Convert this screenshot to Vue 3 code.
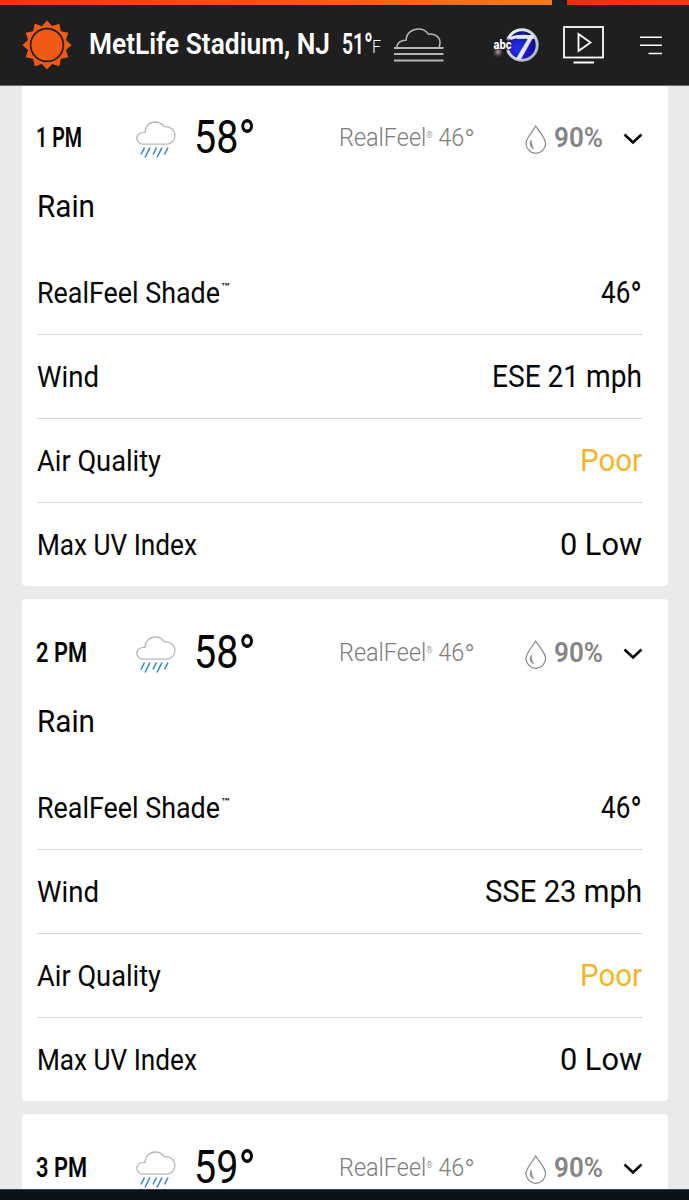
<script setup>
import { h } from 'vue'

// one line of text condensed to a given width, centred on its cap height
const FitText = (props, { slots }) =>
  h('svg', { width: props.w, height: 32, overflow: 'visible' }, [
    h(
      'text',
      { x: 0, y: 16, dy: '.355em', textLength: props.w, lengthAdjust: 'spacingAndGlyphs', fill: 'currentColor' },
      slots.default(),
    ),
  ])
FitText.props = ['w']

const sunPoints = Array.from({ length: 24 }, (_, i) => {
  const r = i % 2 ? 19.6 : 24.6
  const a = (i * Math.PI) / 12
  return `${(25 + r * Math.sin(a)).toFixed(2)},${(25 - r * Math.cos(a)).toFixed(2)}`
}).join(' ')

const hours = [
  { time: '1 PM', timeWidth: 46, temp: '58', wind: 'ESE 21 mph', windWidth: 150 },
  { time: '2 PM', timeWidth: 51, temp: '58', wind: 'SSE 23 mph', windWidth: 157 },
  { time: '3 PM', timeWidth: 51, temp: '59' },
]
</script>

<template>
  <div class="page">
    <header class="header">
      <div class="stripe">
        <span class="stripe-main"></span>
        <span class="stripe-next"></span>
      </div>
      <div class="bar">
        <svg class="sun" width="50" height="50" viewBox="0 0 50 50">
          <polygon :points="sunPoints" fill="#f15a14" />
          <circle cx="25" cy="25" r="16.4" fill="none" stroke="#1f1f1f" stroke-width="1.7" />
        </svg>
        <FitText class="location" w="241">MetLife Stadium, NJ</FitText>
        <FitText class="location current" w="31">51<tspan class="deg" dy=".14em">°</tspan></FitText>
        <FitText class="unit" w="9">F</FitText>
        <svg class="fog" width="50" height="34" viewBox="0 0 50 34" fill="none" stroke="#b5b5b5" stroke-width="1.6">
          <path d="M3 19c0-4 3.5-7 9-6.8C12.6 5 18 1 24.5 1c4.5 0 8 2 10 5.2 6-1 11.5 2.8 11.5 8.3 0 1.7-.3 3.2-1 4.5" />
          <path d="M0 20h49.5M0 26h49.5M0 32.5h49.5" stroke-width="1.8" />
        </svg>
        <svg class="station" width="50" height="42" viewBox="0 0 50 42">
          <defs>
            <radialGradient id="ball" cx=".35" cy=".6" r=".7">
              <stop offset="0" stop-color="#2a2ff0" />
              <stop offset=".6" stop-color="#1515b8" />
              <stop offset="1" stop-color="#08086a" />
            </radialGradient>
            <radialGradient id="glow">
              <stop offset="0" stop-color="#c8a2b8" />
              <stop offset="1" stop-color="#4d3b49" stop-opacity="0" />
            </radialGradient>
            <radialGradient id="shade">
              <stop offset=".6" stop-color="#18151e" />
              <stop offset="1" stop-color="#18151e" stop-opacity="0" />
            </radialGradient>
            <linearGradient id="rim" x2="1" y2="1">
              <stop offset="0" stop-color="#f4f7f8" />
              <stop offset="1" stop-color="#a3afbd" />
            </linearGradient>
          </defs>
          <circle cx="30" cy="21" r="15.2" fill="url(#ball)" stroke="url(#rim)" stroke-width="3" />
          <path d="M18 14.5q10-4 24-1" fill="none" stroke="#e6ebf0" stroke-width="3" />
          <text class="seven" x="22" y="35">7</text>
          <ellipse cx="11" cy="20.5" rx="10" ry="8" fill="url(#shade)" />
          <circle cx="6" cy="28" r="6" fill="url(#glow)" />
          <text class="abc" x="1.5" y="24.5" textLength="18" lengthAdjust="spacingAndGlyphs">abc</text>
        </svg>
        <svg class="video" width="42" height="38" viewBox="0 0 42 38" fill="none" stroke="#fff">
          <rect x="1" y="1" width="39" height="30.5" stroke-width="1.8" />
          <path d="M15.5 8v17l12-8.5z" stroke-width="1.8" />
          <path d="M10.5 36.5h20.5" stroke-width="2" />
        </svg>
        <svg class="menu" width="22" height="20" viewBox="0 0 22 20" stroke="#fff" stroke-width="1.5">
          <path d="M0 1.3h22M0 9.3h22M8.5 17.5h13.5" />
        </svg>
      </div>
    </header>

    <main class="list">
      <section v-for="hour in hours" :key="hour.time" class="card">
        <div class="head">
          <FitText class="time" :w="hour.timeWidth">{{ hour.time }}</FitText>
          <svg class="rain" width="40" height="38" viewBox="0 0 40 38" fill="none">
            <path
              d="M8 23.2C3.5 23.2.8 20.5.8 17.2c0-3.5 3-6 8.2-5.7C9.3 5 13.5 1 19.2 1c4 0 7 1.7 9 4.6 6-.3 10.7 3 10.7 8.9 0 5-3.7 8.7-8.7 8.7z"
              stroke="#b9b9b9"
              stroke-width="1.3"
            />
            <path
              d="M8.5 26.5l-3.5 7M14 26.5l-5 10M20.5 26.5l-3.5 7M26 26.5l-5 10M32 26.5l-3.5 7"
              stroke="#2d86cc"
              stroke-width="1.5"
            />
          </svg>
          <FitText class="temp" w="62">{{ hour.temp }}<tspan class="deg" dy=".11em">°</tspan></FitText>
          <FitText class="realfeel" w="136">RealFeel<tspan class="reg" dy="-.95em">®</tspan><tspan dy=".322em"> 46</tspan><tspan class="deg" dy=".14em">°</tspan></FitText>
          <svg class="drop" width="22" height="30" viewBox="0 0 22 30" fill="none" stroke="#858585">
            <path d="M10.7 1C7 7.5 1 13 1 18.5a9.8 9.8 0 0 0 19.6 0C20.6 13 14.5 7.5 10.7 1z" stroke-width="1.2" />
            <path d="M6.3 15c-2.3 3.5-1 7.5 2.3 8.8-1.5-2.8-2.3-5.5-2.3-8.8z" fill="#858585" stroke-width=".6" />
          </svg>
          <FitText class="chance" w="49">90%</FitText>
          <svg class="chevron" width="20" height="12" viewBox="0 0 20 12" fill="none" stroke="#000" stroke-width="2.5">
            <path d="M1.5 1.5L10 9.5l8.500-8" />
          </svg>
        </div>
        <template v-if="hour.wind">
          <FitText class="phrase" w="58">Rain</FitText>
          <div class="rows">
            <div class="row">
              <div class="label">
                <FitText w="183">RealFeel Shade</FitText>
                <FitText class="tm" w="9">™</FitText>
              </div>
              <FitText class="value" w="41">46<tspan class="deg" dy=".14em">°</tspan></FitText>
            </div>
            <div class="row">
              <FitText class="label" w="62">Wind</FitText>
              <FitText class="value" :w="hour.windWidth">{{ hour.wind }}</FitText>
            </div>
            <div class="row">
              <FitText class="label" w="124">Air Quality</FitText>
              <FitText class="value poor" w="62">Poor</FitText>
            </div>
            <div class="row">
              <FitText class="label" w="160">Max UV Index</FitText>
              <FitText class="value" w="82">0 Low</FitText>
            </div>
          </div>
        </template>
      </section>
    </main>
    <footer class="bottom"></footer>
  </div>
</template>

<style>
body {
  margin: 0;
}
</style>

<style scoped>
.page {
  display: flex;
  flex-direction: column;
  width: 689px;
  height: 1200px;
  overflow: hidden;
  background: #eaeaea;
  font-family: Roboto, 'Liberation Sans', sans-serif;
  color: #050505;
}

svg {
  display: block;
  flex: none;
}

.deg {
  font-size: 1.2em;
}

.header {
  flex: none;
  height: 86px;
  box-sizing: border-box;
  background: #1f1f1f;
  border-bottom: 1px solid #6b6b6b;
  z-index: 1;
}

.stripe {
  display: flex;
  justify-content: space-between;
  height: 5px;
}

.stripe-main {
  width: 552px;
  background: linear-gradient(90deg, #e5380f, #f47b1c);
}

.stripe-next {
  width: 122px;
  background: linear-gradient(90deg, #e5330f, #e63f12);
}

.bar {
  display: flex;
  align-items: center;
  height: 80px;
  padding-left: 22px;
}

.location {
  margin: -5px 0 0 17px;
  font-size: 30px;
  font-weight: 600;
  color: #fff;
}

.current {
  margin-left: 12px;
}

.unit {
  margin: 3px 0 0 -1px;
  font-size: 18px;
  font-weight: 300;
  color: #fff;
}

.fog {
  margin-left: 13px;
}

.station {
  margin-left: 48px;
}

.seven {
  font-size: 33px;
  font-weight: 700;
  font-style: italic;
  fill: #e5eaf0;
}

.abc {
  font-size: 13px;
  font-weight: 800;
  fill: #fff;
}

.video {
  margin-left: 21px;
}

.menu {
  margin: 2px 0 0 35px;
}

.list {
  flex: 1;
  min-height: 0;
  margin: -2px 21px 0 22px;
  overflow: hidden;
  display: flex;
  flex-direction: column;
  gap: 13px;
}

.card {
  flex: none;
  height: 502px;
  box-sizing: border-box;
  padding: 0 26px 0 15px;
  background: #fff;
  border-radius: 4px;
}

.head {
  display: grid;
  grid-template-columns: 99px 57px 145px 187px 29px 69px 1fr;
  align-items: center;
  height: 105px;
}

.time {
  margin-left: -1px;
  font-size: 27px;
  font-weight: 600;
}

.rain {
  margin-top: 6px;
}

.temp {
  margin: 1px 0 0 1px;
  font-size: 46px;
  font-weight: 400;
}

.realfeel {
  margin-left: 1px;
  font-size: 26.5px;
  font-weight: 340;
  color: #7c7c7c;
}

.reg {
  font-size: 9px;
}

.drop {
  margin-top: 6px;
}

.chance {
  font-size: 27px;
  font-weight: 600;
  color: #858585;
}

.chevron {
  margin-top: 5px;
}

.phrase {
  margin-top: 1px;
  font-size: 32px;
  font-weight: 380;
}

.rows {
  padding-top: 29px;
}

.row {
  display: flex;
  justify-content: space-between;
  align-items: center;
  height: 84px;
  box-sizing: border-box;
  border-bottom: 1px solid #d8d8d8;
}

.row:last-child {
  border-bottom: none;
}

.label {
  display: flex;
  font-size: 29px;
  font-weight: 380;
}

.tm {
  margin: -7px 0 0 1px;
  font-size: 10px;
  font-weight: 600;
}

.value {
  margin-top: -2px;
  font-size: 32px;
  font-weight: 380;
}

.poor {
  color: #f2b526;
}

.bottom {
  flex: none;
  height: 11px;
  box-sizing: border-box;
  background: #0b1319;
  border-top: 1px solid #39434a;
}
</style>
